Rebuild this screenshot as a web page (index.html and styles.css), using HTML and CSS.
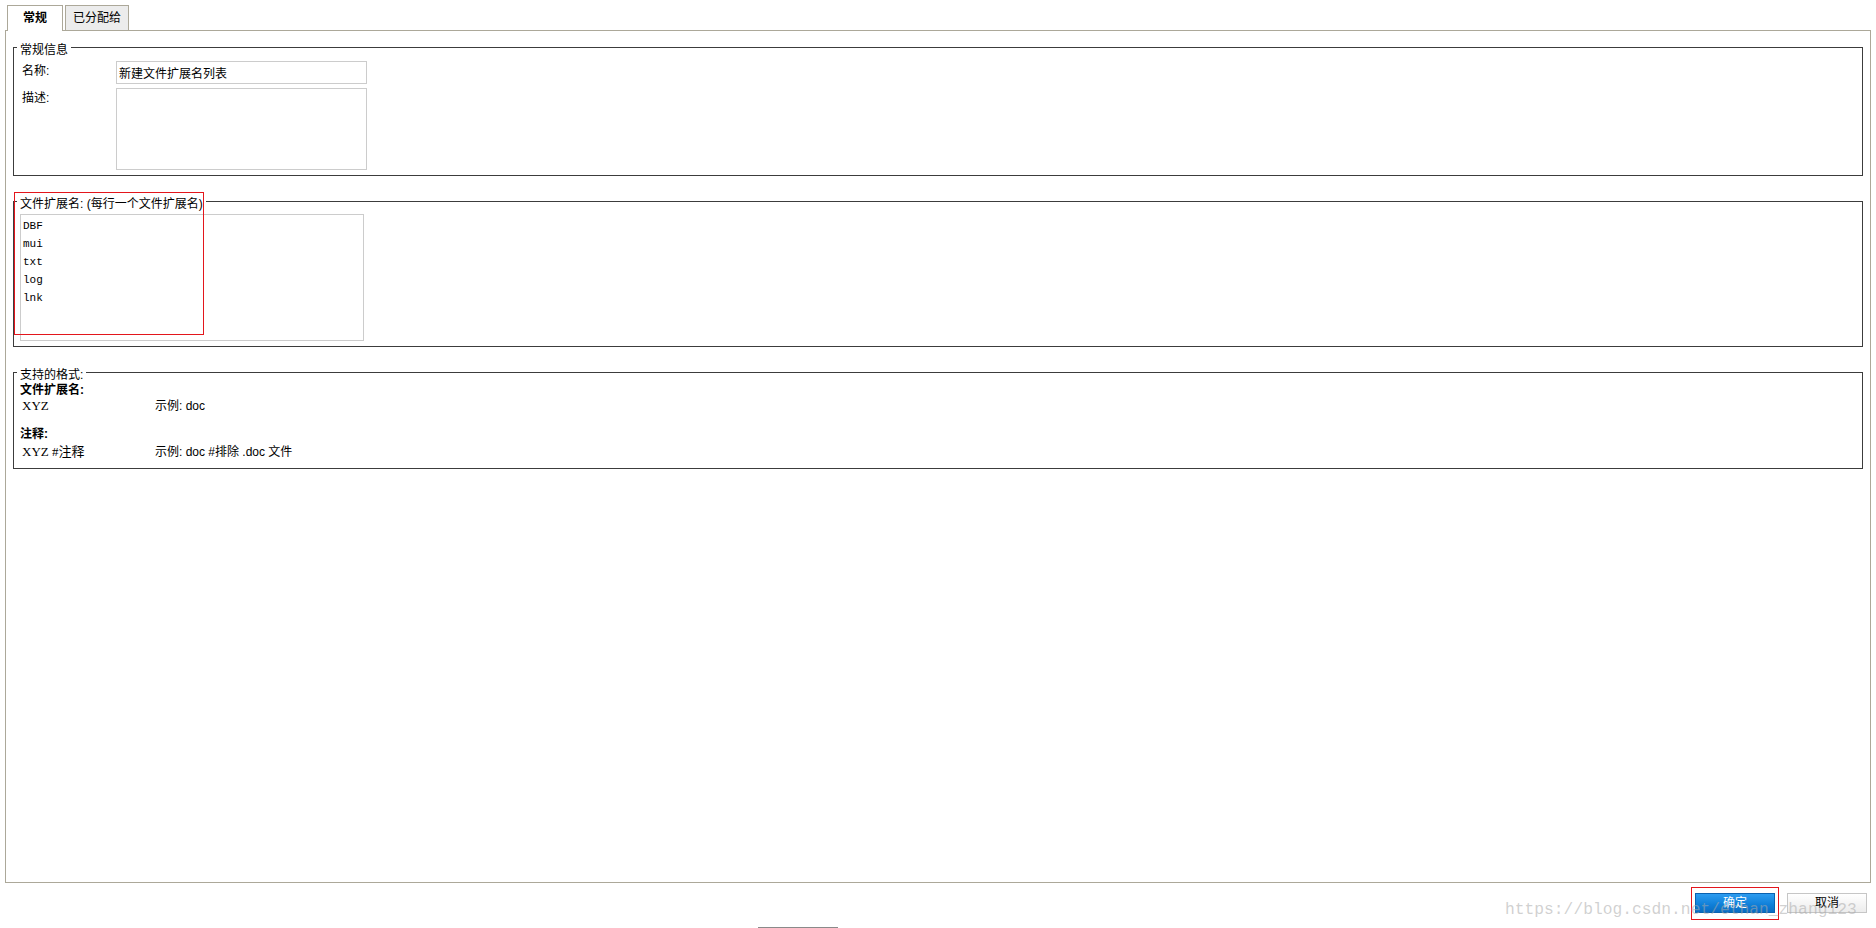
FILE: index.html
```html
<!DOCTYPE html>
<html lang="zh-CN">
  <head>
    <meta charset="UTF-8" />
    <meta name="viewport" content="width=device-width, initial-scale=1.0" />
    <title>文件扩展名列表</title>
    <link rel="stylesheet" href="styles.css">
  </head>
  <body>
    <div class="tabs">
      <div class="tab active">常规</div>
      <div class="tab">已分配给</div>
    </div>

    <div class="panel">
      <fieldset class="group">
        <legend><span>常规信息</span></legend>
        <div class="field">
          <label for="name">名称:</label>
          <input type="text" id="name" value="新建文件扩展名列表" />
        </div>
        <div class="field field-desc">
          <label for="desc">描述:</label>
          <textarea id="desc" class="desc"></textarea>
        </div>
      </fieldset>

      <fieldset class="group">
        <legend><span>文件扩展名: (每行一个文件扩展名)</span></legend>
        <textarea class="ext-list">DBF
mui
txt
log
lnk</textarea>
      </fieldset>

      <fieldset class="group group-format">
        <legend><span>支持的格式:</span></legend>
        <div class="fmt-head">文件扩展名:</div>
        <div class="fmt-row">
          <span class="fmt-key">XYZ</span>
          <span>示例: doc</span>
        </div>
        <div class="fmt-head fmt-head-2">注释:</div>
        <div class="fmt-row fmt-row-2">
          <span class="fmt-key">XYZ #注释</span>
          <span>示例: doc #排除 .doc 文件</span>
        </div>
      </fieldset>

      <!-- highlight box drawn over the extension list -->
      <div class="mark mark-ext"></div>
    </div>

    <div class="actions">
      <span class="mark-ok">
        <button class="btn btn-primary">确定</button>
      </span>
      <button class="btn btn-cancel">取消</button>
      <div class="watermark">https://blog.csdn.net/ethan_zhang123</div>
    </div>

    <div class="scroll-thumb"></div>
  </body>
</html>
```

FILE: styles.css
```css
body {
  margin: 0;
  font-family: "Liberation Sans", "Noto Sans CJK SC", sans-serif;
  font-size: 12px;
  color: #000;
  background: #fff;
}

/* tabs */
.tabs {
  display: flex;
  gap: 2px;
  padding: 5px 0 0 7px;
}
.tab {
  height: 24px;
  line-height: 24px;
  padding: 0 7px;
  border: 1px solid #aca899;
  border-bottom: none;
  background: #ececec;
}
.tab.active {
  width: 54px;
  padding: 0;
  text-align: center;
  font-weight: bold;
  background: #fff;
  height: 25px;
  margin-bottom: -1px;
  position: relative;
  z-index: 1;
}

/* main panel */
.panel {
  position: relative;
  margin-left: 5px;
  width: 1864px;
  height: 851px;
  border: 1px solid #aca899;
}

.group {
  margin: 9px 7px 0 7px;
  padding: 0 4px 5px 3px;
  border: 1px solid #3c3c3c;
}
.group + .group {
  margin-top: 18px;
}
.group legend {
  padding: 0 3px;
  line-height: 14px;
}
.group legend span {
  position: relative;
  top: 3px;
}

.field {
  display: flex;
  align-items: flex-start;
  margin-top: 7px;
}
.field-desc {
  margin-top: 4px;
}
.field label {
  width: 94px;
  margin-left: 5px;
  padding-top: 3px;
  line-height: 14px;
}
input[type="text"] {
  width: 251px;
  height: 23px;
  box-sizing: border-box;
  margin: 0;
  padding: 0 2px;
  border: 1px solid #cccccc;
  font-family: inherit;
  font-size: 12px;
}
textarea {
  box-sizing: border-box;
  margin: 0;
  border: 1px solid #cccccc;
  resize: none;
  outline: none;
}
.desc {
  width: 251px;
  height: 82px;
}
.ext-list {
  display: block;
  width: 344px;
  height: 127px;
  margin: 6px 0 0 3px;
  padding: 2px 2px;
  font-family: "Liberation Mono", monospace;
  font-size: 11px;
  line-height: 18px;
}

/* supported formats */
.group-format {
  padding-bottom: 8px;
}
.fmt-head {
  font-weight: bold;
  line-height: 14px;
  margin: 4px 0 0 3px;
}
.fmt-head-2 {
  margin-top: 13px;
}
.fmt-row {
  display: flex;
  line-height: 16px;
  margin-top: 1px;
}
.fmt-row-2 {
  margin-top: 3px;
}
.fmt-key {
  width: 133px;
  margin-left: 5px;
  font-family: "Liberation Serif", "Noto Sans CJK SC", serif;
  font-size: 13px;
}

/* red annotation boxes */
.mark {
  position: absolute;
  border: 1px solid #e3161c;
}
.mark-ext {
  left: 8px;
  top: 161px;
  width: 188px;
  height: 141px;
}
.mark-ok {
  display: inline-block;
  border: 1px solid #e3161c;
  padding: 5px 3px 6px 3px;
}

/* bottom buttons */
.actions {
  position: relative;
  display: flex;
  align-items: flex-start;
  justify-content: flex-end;
  height: 40px;
  padding: 4px 9px 0 0;
}
.btn {
  display: block;
  width: 80px;
  height: 20px;
  margin: 0;
  padding: 0;
  font-family: inherit;
  font-size: 12px;
  line-height: 18px;
  cursor: pointer;
}
.btn-primary {
  color: #fff;
  border: 1px solid #0b62b0;
  background: linear-gradient(#2d9cf0, #0f7fd8 60%, #0a6cc2);
}
.btn-cancel {
  margin: 6px 0 0 8px;
  color: #000;
  border: 1px solid #c6c6c6;
  background: linear-gradient(#ffffff, #ececec);
}
.watermark {
  position: absolute;
  left: 1505px;
  top: 18px;
  font-family: "Liberation Mono", monospace;
  font-size: 16.3px;
  line-height: 18px;
  color: rgba(170, 170, 170, 0.55);
  white-space: nowrap;
  pointer-events: none;
}

.scroll-thumb {
  width: 80px;
  height: 1px;
  margin-left: 758px;
  background: #8a8a8a;
}
```
